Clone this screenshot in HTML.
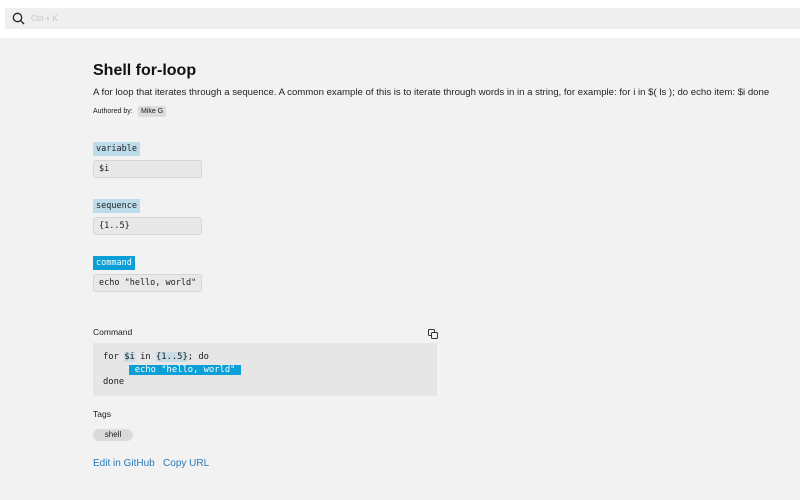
<!DOCTYPE html>
<html><head><style>
body{margin:0;width:800px;height:500px;background:#f2f2f2;font-family:"Liberation Sans",sans-serif;position:relative;overflow:hidden;color:#1a1a1a}
.top{position:absolute;left:0;top:0;width:800px;height:38px;background:#fff}
.search{position:absolute;left:5px;top:8px;width:795px;height:21px;background:#efefef}
.a{position:absolute;white-space:nowrap}
.mono{font-family:"DejaVu Sans Mono","Liberation Mono",monospace}
.lbl{font-size:8.5px;padding:2px 3px;line-height:10px;background:#bcdcea;color:#222}
.box{position:absolute;left:93px;width:102px;height:16px;border:1px solid #d6d6d6;border-radius:3px;background:#e8e8e8;font-size:8.5px;line-height:16px;padding-left:5px;box-sizing:content-box}
</style></head><body>
<div class="top"></div>
<div class="search"></div>
<svg class="a" style="left:12px;top:12px" width="13" height="13" viewBox="0 0 13 13"><circle cx="5.5" cy="5.5" r="4.2" fill="none" stroke="#222" stroke-width="1.3"/><line x1="8.6" y1="8.6" x2="12" y2="12" stroke="#222" stroke-width="1.3"/></svg>
<div class="a" style="left:31px;top:14px;font-size:8px;color:#c4c4c4">Ctrl + K</div>
<div class="a" style="left:93px;top:62px;font-size:16px;font-weight:bold;color:#111">Shell for-loop</div>
<div class="a" style="left:93px;top:87px;font-size:9.6px;color:#222">A for loop that iterates through a sequence. A common example of this is to iterate through words in in a string, for example: for i in $( ls ); do echo item: $i done</div>
<div class="a" style="left:93px;top:108px;font-size:7px">Authored by:</div>
<div class="a" style="left:138px;top:106px;font-size:7px;background:#dcdcdc;padding:2px 3px;border-radius:2px">Mike G</div>
<div class="a mono lbl" style="left:93px;top:142px">variable</div>
<div class="box mono" style="top:160px">$i</div>
<div class="a mono lbl" style="left:93px;top:199px">sequence</div>
<div class="box mono" style="top:217px">{1..5}</div>
<div class="a mono lbl" style="left:93px;top:256px;background:#0a9fd6;color:#fff">command</div>
<div class="box mono" style="top:274px">echo "hello, world"</div>
<div class="a" style="left:93px;top:327px;font-size:8.5px">Command</div>
<svg class="a" style="left:428px;top:329px" width="10" height="10" viewBox="0 0 10 10"><rect x="0.5" y="0.5" width="6" height="6" rx="1" fill="none" stroke="#333"/><rect x="3.5" y="3.5" width="6" height="6" rx="1" fill="#f2f2f2" stroke="#333"/></svg>
<div class="a" style="left:93px;top:343px;width:344px;height:53px;background:#e6e6e6"></div>
<div class="a mono" style="left:103px;top:351px;font-size:8.8px;line-height:12.5px">for <span style="background:#c9dde6">$i</span> in <span style="background:#c9dde6">{1..5}</span>; do<br>&nbsp;&nbsp;&nbsp;&nbsp;&nbsp;<span style="background:#0a9fd6;color:#fff">&nbsp;echo "hello, world"&nbsp;</span><br>done</div>
<div class="a" style="left:93px;top:409px;font-size:8.5px">Tags</div>
<div class="a" style="left:93px;top:429px;width:40px;height:12px;border-radius:6px;background:#dadada;font-size:8px;line-height:12px;text-align:center">shell</div>
<div class="a" style="left:93px;top:458px;font-size:10px;color:#2a7ab8">Edit in GitHub&nbsp;&nbsp; Copy URL</div>
</body></html>
